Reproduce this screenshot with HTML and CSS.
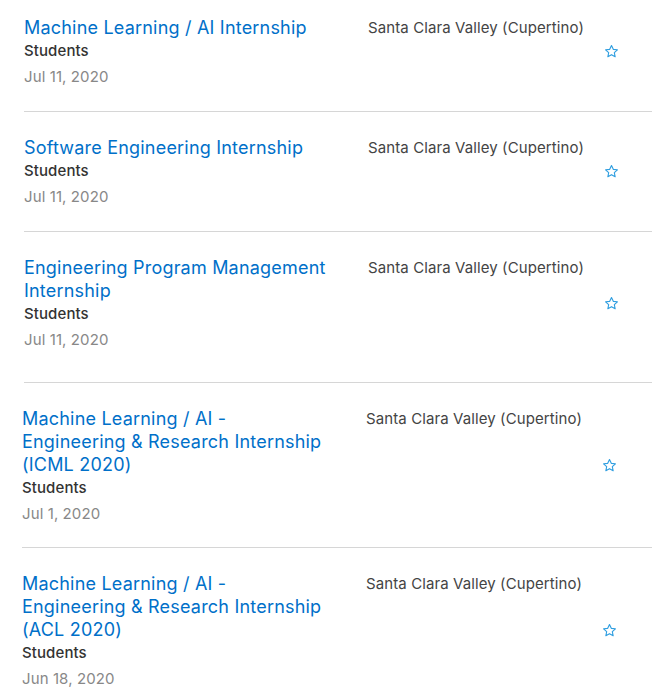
FILE: index.html
```html
<!DOCTYPE html>
<html lang="en">
<head>
<meta charset="utf-8">
<title>Jobs</title>
<link rel="stylesheet" href="styles.css">
</head>
<body>
<ul class="results">
  <li class="row">
    <div class="info">
      <a class="title" href="#">Machine Learning / AI Internship</a>
      <div class="team">Students</div>
      <div class="date">Jul 11, 2020</div>
    </div>
    <div class="location">Santa Clara Valley (Cupertino)</div>
    <button class="fav" aria-label="Favorite"><svg viewBox="0 0 16 16" width="15" height="15"><path d="M8 1.6l1.9 4.1 4.4.5-3.3 3 .9 4.4L8 11.4l-3.9 2.2.9-4.4-3.3-3 4.4-.5z"/></svg></button>
  </li>
  <li class="row">
    <div class="info">
      <a class="title" href="#">Software Engineering Internship</a>
      <div class="team">Students</div>
      <div class="date">Jul 11, 2020</div>
    </div>
    <div class="location">Santa Clara Valley (Cupertino)</div>
    <button class="fav" aria-label="Favorite"><svg viewBox="0 0 16 16" width="15" height="15"><path d="M8 1.6l1.9 4.1 4.4.5-3.3 3 .9 4.4L8 11.4l-3.9 2.2.9-4.4-3.3-3 4.4-.5z"/></svg></button>
  </li>
  <li class="row row-tall">
    <div class="info">
      <a class="title" href="#">Engineering Program Management Internship</a>
      <div class="team">Students</div>
      <div class="date">Jul 11, 2020</div>
    </div>
    <div class="location">Santa Clara Valley (Cupertino)</div>
    <button class="fav" aria-label="Favorite"><svg viewBox="0 0 16 16" width="15" height="15"><path d="M8 1.6l1.9 4.1 4.4.5-3.3 3 .9 4.4L8 11.4l-3.9 2.2.9-4.4-3.3-3 4.4-.5z"/></svg></button>
  </li>
  <li class="row row-shift">
    <div class="info">
      <a class="title" href="#">Machine Learning / AI -<br>Engineering &amp; Research Internship (ICML 2020)</a>
      <div class="team">Students</div>
      <div class="date">Jul 1, 2020</div>
    </div>
    <div class="location">Santa Clara Valley (Cupertino)</div>
    <button class="fav" aria-label="Favorite"><svg viewBox="0 0 16 16" width="15" height="15"><path d="M8 1.6l1.9 4.1 4.4.5-3.3 3 .9 4.4L8 11.4l-3.9 2.2.9-4.4-3.3-3 4.4-.5z"/></svg></button>
  </li>
  <li class="row row-shift">
    <div class="info">
      <a class="title" href="#">Machine Learning / AI -<br>Engineering &amp; Research Internship (ACL 2020)</a>
      <div class="team">Students</div>
      <div class="date">Jun 18, 2020</div>
    </div>
    <div class="location">Santa Clara Valley (Cupertino)</div>
    <button class="fav" aria-label="Favorite"><svg viewBox="0 0 16 16" width="15" height="15"><path d="M8 1.6l1.9 4.1 4.4.5-3.3 3 .9 4.4L8 11.4l-3.9 2.2.9-4.4-3.3-3 4.4-.5z"/></svg></button>
  </li>
</ul>
</body>
</html>
```
FILE: styles.css
```css
html, body {
  margin: 0;
  padding: 0;
  background: #fff;
}
body {
  font-family: Inter, "Liberation Sans", Arial, sans-serif;
  -webkit-font-smoothing: antialiased;
}
.results {
  list-style: none;
  margin: 0;
  padding: 0 0 0 24px;
}
.row {
  display: grid;
  grid-template-columns: 306px minmax(0, 1fr) 24px;
  column-gap: 38px;
  align-items: center;
  padding: 24px 29px 24px 0;
  border-bottom: 1px solid #d6d6d6;
}
.row:first-child {
  padding-top: 16px;
}
.row-tall {
  padding-bottom: 32px;
}
.row-shift {
  margin-left: -2px;
  padding-right: 31px;
  padding-bottom: 23px;
}
.info {
  display: flex;
  flex-direction: column;
}
.title {
  font-size: 18px;
  line-height: 23px;
  color: #0070c9;
  text-decoration: none;
  letter-spacing: 0.2px;
}
.team {
  margin-top: 1px;
  font-size: 15px;
  line-height: 22px;
  font-weight: 500;
  color: #333;
  letter-spacing: 0.1px;
}
.date {
  margin-top: 5px;
  font-size: 15px;
  line-height: 20px;
  color: #888;
  letter-spacing: 0.1px;
}
.location {
  align-self: start;
  font-size: 15px;
  line-height: 23px;
  color: #444;
  white-space: nowrap;
  letter-spacing: 0.1px;
}
.fav {
  justify-self: center;
  width: 24px;
  height: 24px;
  padding: 0;
  border: 0;
  background: none;
  display: flex;
  align-items: center;
  justify-content: center;
}
.fav svg {
  fill: none;
  stroke: #2f9ee0;
  stroke-width: 1.2;
  stroke-linejoin: round;
}
```
